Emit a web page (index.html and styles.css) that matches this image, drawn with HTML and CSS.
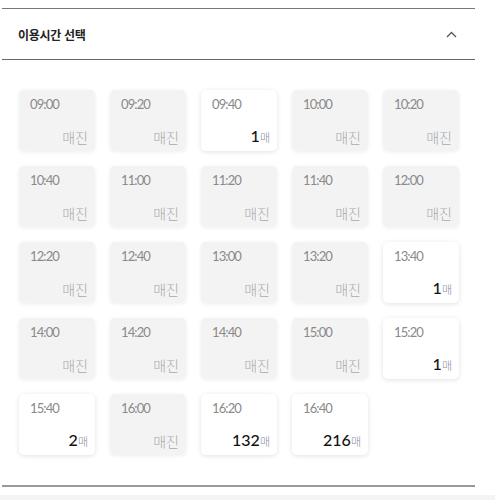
FILE: index.html
```html
<!DOCTYPE html>
<html lang="ko">
<head>
    <meta charset="UTF-8">
    <title>이용시간 선택</title>
    <link rel="stylesheet" href="styles.css">
</head>
<body>
    <div class="panel">
        <div class="panel-head">
            <span class="panel-title">이용시간 선택</span>
            <svg class="chevron" width="11" height="7" viewBox="0 0 11 7">
                <path d="M1 6 L5.5 1.5 L10 6" fill="none" stroke="#555" stroke-width="1.3"/>
            </svg>
        </div>
        <div class="slots" id="slots"></div>
    </div>
    <div class="footer-band"></div>

    <script>
        const slots = [
            ['09:00', 0], ['09:20', 0], ['09:40', 1], ['10:00', 0], ['10:20', 0],
            ['10:40', 0], ['11:00', 0], ['11:20', 0], ['11:40', 0], ['12:00', 0],
            ['12:20', 0], ['12:40', 0], ['13:00', 0], ['13:20', 0], ['13:40', 1],
            ['14:00', 0], ['14:20', 0], ['14:40', 0], ['15:00', 0], ['15:20', 1],
            ['15:40', 2], ['16:00', 0], ['16:20', 132], ['16:40', 216]
        ];

        const box = document.getElementById('slots');

        slots.forEach(([time, left]) => {
            const card = document.createElement('div');
            card.className = left > 0 ? 'slot' : 'slot soldout';
            const t = document.createElement('div');
            t.className = 'slot-time';
            t.textContent = time;
            const s = document.createElement('div');
            s.className = 'slot-state';
            if (left > 0) {
                s.innerHTML = '<b>' + left + '</b><small>매</small>';
            } else {
                s.textContent = '매진';
            }
            card.appendChild(t);
            card.appendChild(s);
            box.appendChild(card);
        });
    </script>
</body>
</html>
```

FILE: styles.css
```css
body {
    margin: 0;
    padding-top: 8px;
    background: #fff;
    font-family: Lato, "Noto Sans CJK KR", sans-serif;
}

.panel {
    width: 473px;
    margin-left: 2px;
    border-top: 1px solid #777;
    border-bottom: 2px solid #999;
}

.panel-head {
    height: 50px;
    border-bottom: 1px solid #666;
    display: flex;
    align-items: center;
    justify-content: space-between;
    padding: 0 18px 0 16px;
}

.panel-title {
    font-family: "Noto Sans CJK KR", sans-serif;
    font-size: 12px;
    font-weight: bold;
    color: #222;
    letter-spacing: -0.3px;
}

.chevron {
    display: block;
}

.slots {
    display: grid;
    grid-template-columns: repeat(5, 76px);
    grid-auto-rows: 61px;
    column-gap: 15px;
    row-gap: 15px;
    padding: 30px 17px 30px;
}

.slot {
    background: #fff;
    border-radius: 5px;
    box-shadow: 0 1px 5px rgba(0, 0, 0, 0.12);
    padding: 6px 7px 5px 11px;
    display: flex;
    flex-direction: column;
    justify-content: space-between;
}

.slot.soldout {
    background: #f3f3f3;
    box-shadow: 0 1px 4px rgba(0, 0, 0, 0.07);
}

.slot-time {
    font-size: 13px;
    color: #8a8a8a;
    letter-spacing: -0.9px;
}

.slot-state {
    text-align: right;
    font-family: "Noto Sans CJK KR", sans-serif;
    font-size: 14px;
    font-weight: 300;
    color: #aaa;
    line-height: 18px;
}

.slot-state b {
    font-family: Lato, sans-serif;
    font-size: 16px;
    font-weight: 500;
    color: #111;
}

.slot-state small {
    font-size: 11px;
    color: #8a8a9a;
}

.footer-band {
    height: 20px;
    margin-top: 8px;
    background: #f4f4f4;
}
```
